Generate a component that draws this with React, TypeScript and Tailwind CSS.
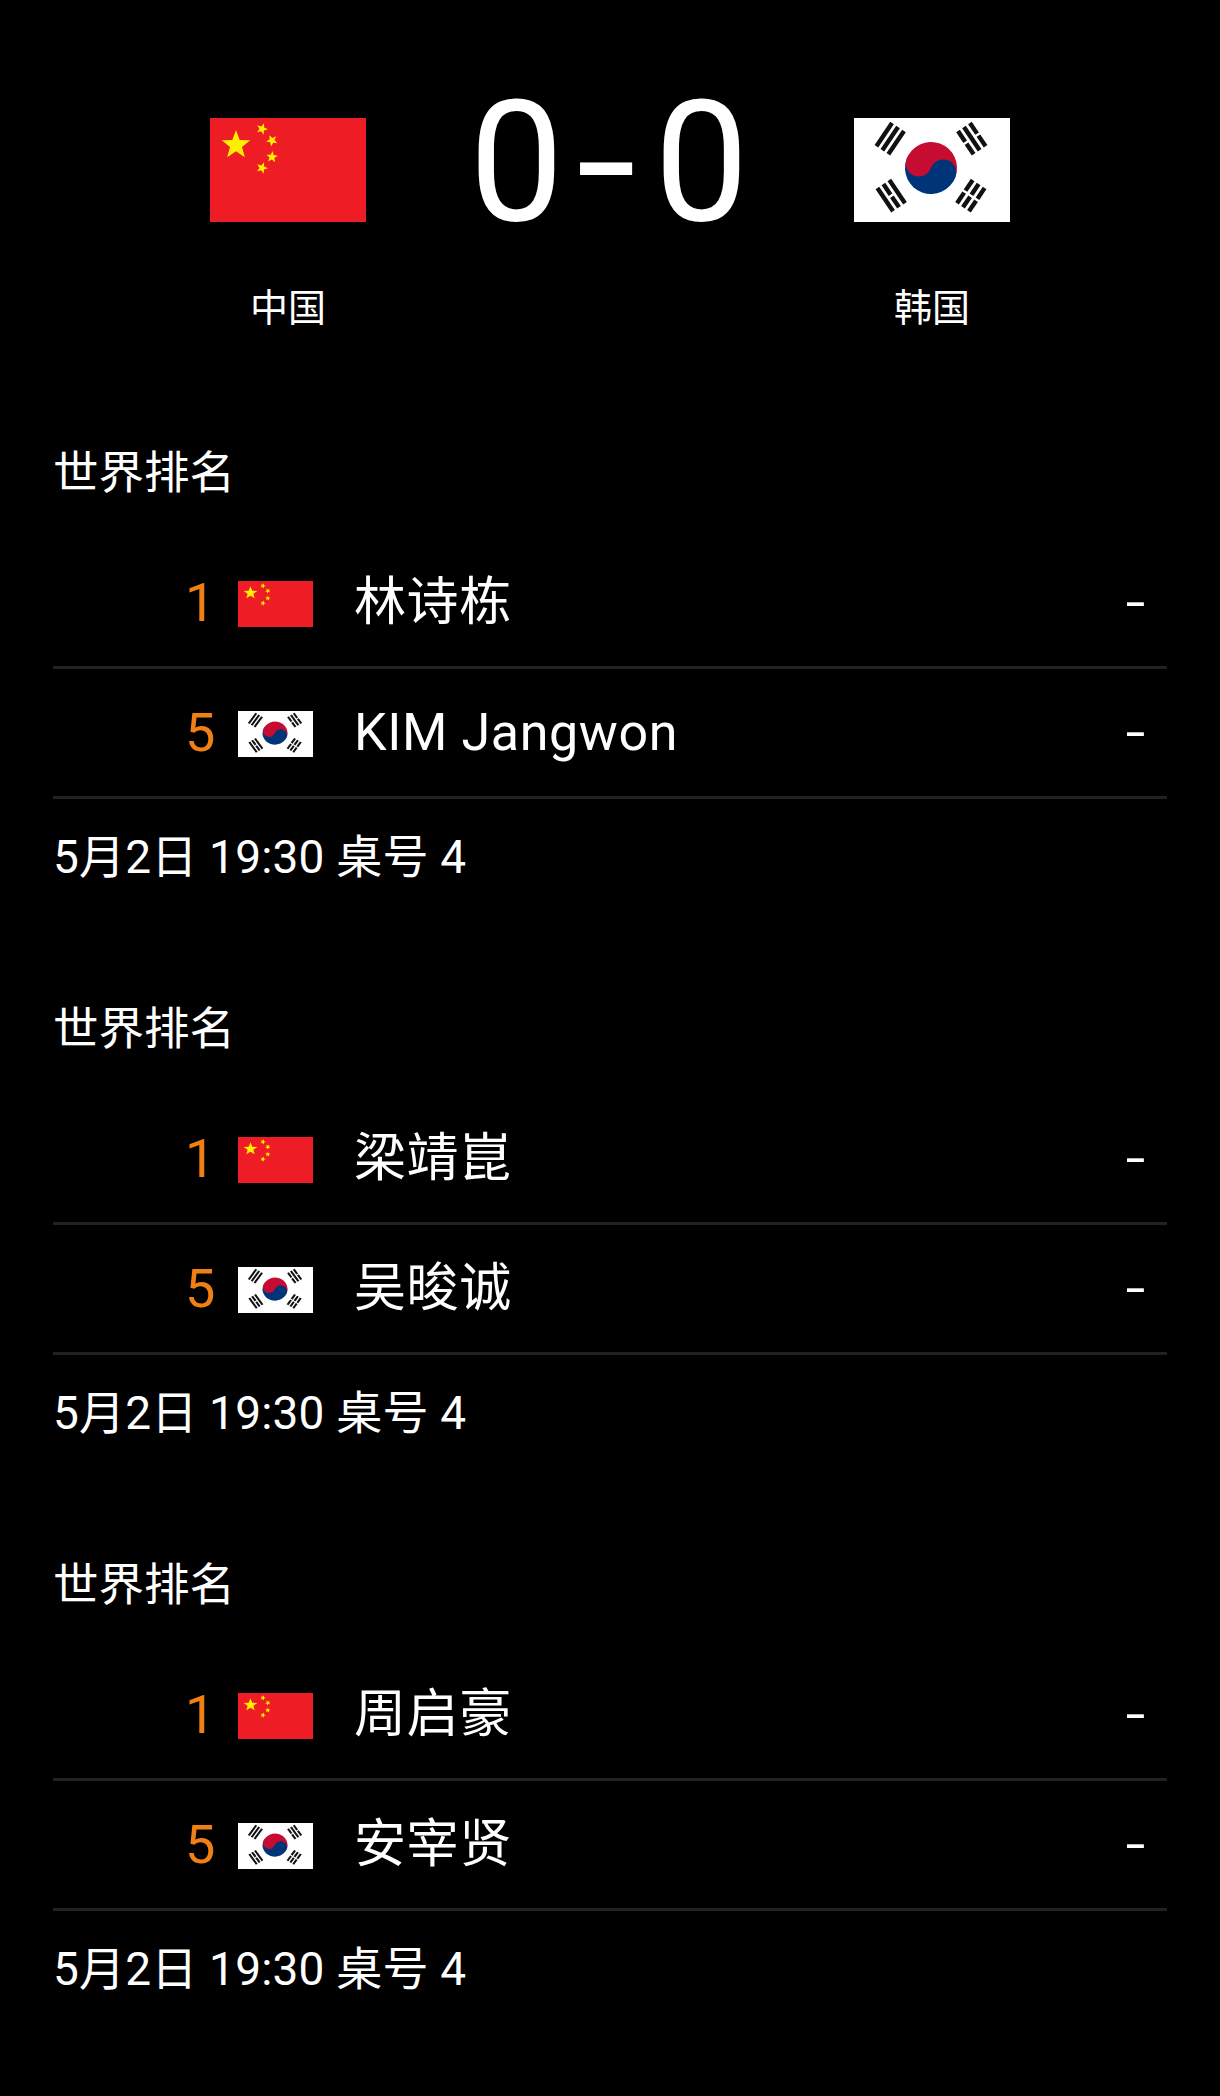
import React from "react";

const CJK = "font-['Roboto','Noto_Sans_CJK_SC',sans-serif]";

function Star({ cx, cy, r, rot = 0 }: { cx: number; cy: number; r: number; rot?: number }) {
  const pts: string[] = [];
  for (let i = 0; i < 10; i++) {
    const a = ((-90 + rot + i * 36) * Math.PI) / 180;
    const rad = i % 2 === 0 ? r : r * 0.42;
    pts.push(`${(cx + rad * Math.cos(a)).toFixed(2)},${(cy + rad * Math.sin(a)).toFixed(2)}`);
  }
  return <polygon points={pts.join(" ")} fill="#ffee00" />;
}

function ChinaFlag({ className }: { className: string }) {
  return (
    <svg viewBox="0 0 156 104" preserveAspectRatio="none" className={className}>
      <rect width="156" height="104" fill="#ee1c25" />
      <g className="blur-[0.7px]">
        <Star cx={26} cy={27} r={15} />
        <Star cx={52} cy={11} r={6} rot={20} />
        <Star cx={62} cy={22.5} r={6} rot={45} />
        <Star cx={62} cy={39} r={6} rot={5} />
        <Star cx={52} cy={50} r={6} rot={20} />
      </g>
    </svg>
  );
}

function Trigram({ x, y, rot, breaks }: { x: number; y: number; rot: number; breaks: boolean[] }) {
  return (
    <g transform={`translate(${x} ${y}) rotate(${rot})`}>
      {breaks.map((b, i) => {
        const py = -9.5 + i * 7.2 - 0.5;
        return b ? (
          <g key={i}>
            <rect x={-14} y={py} width={12.8} height={4.4} fill="#111" />
            <rect x={1.2} y={py} width={12.8} height={4.4} fill="#111" />
          </g>
        ) : (
          <rect key={i} x={-14} y={py} width={28} height={4.4} fill="#111" />
        );
      })}
    </g>
  );
}

function KoreaFlag({ className }: { className: string }) {
  const cx = 77;
  const cy = 50;
  const r = 26;
  return (
    <svg viewBox="0 0 156 104" preserveAspectRatio="none" className={className}>
      <rect width="156" height="104" fill="#ffffff" />
      <g className="blur-[0.7px]">
        <g transform={`rotate(20 ${cx} ${cy})`}>
          <path d={`M${cx - r} ${cy}A${r} ${r} 0 0 1 ${cx + r} ${cy}Z`} fill="#c60c30" />
          <path d={`M${cx - r} ${cy}A${r} ${r} 0 0 0 ${cx + r} ${cy}Z`} fill="#003478" />
          <circle cx={cx - r / 2} cy={cy} r={r / 2} fill="#c60c30" />
          <circle cx={cx + r / 2} cy={cy} r={r / 2} fill="#003478" />
        </g>
        <Trigram x={36.7} y={21} rot={-56} breaks={[false, false, false]} />
        <Trigram x={117.3} y={21} rot={56} breaks={[true, false, true]} />
        <Trigram x={36.7} y={78} rot={56} breaks={[false, true, false]} />
        <Trigram x={117.3} y={78} rot={-56} breaks={[true, true, true]} />
      </g>
    </svg>
  );
}

function PlayerRow({ rank, name, korea }: { rank: string; name: string; korea?: boolean }) {
  return (
    <div className="flex h-[130px] items-center border-b-[3px] border-[#222222] pl-[134px] pr-[21px]">
      <span className="-ml-[2px] w-[53px] text-[54px] font-normal leading-none text-[#f08014]">{rank}</span>
      {korea ? (
        <KoreaFlag className="mt-[2px] h-[46px] w-[75px]" />
      ) : (
        <ChinaFlag className="mt-[2px] h-[46px] w-[75px]" />
      )}
      <span className="ml-[41px] flex-1 text-[52px] font-normal leading-none tracking-[0.6px] text-white">{name}</span>
      <span className="text-[72px] font-light leading-none text-white">-</span>
    </div>
  );
}

function Match({ a, b }: { a: string; b: string }) {
  return (
    <section className="mx-[53px] h-[556px]">
      <div className="flex h-[136px] items-center pt-[6px] text-[45.5px] font-normal leading-none text-white">世界排名</div>
      <PlayerRow rank="1" name={a} />
      <PlayerRow rank="5" name={b} korea />
      <div className="flex h-[116px] items-center text-[46px] font-normal leading-none tracking-[0.2px] text-white">5月2日 19:30 桌号 4</div>
    </section>
  );
}

export default function App() {
  return (
    <div className={`h-[2096px] w-[1220px] overflow-hidden bg-black pt-[80px] ${CJK}`}>
      <div className="flex h-[142px] items-end justify-center">
        <ChinaFlag className="h-[104px] w-[156px]" />
        <div className="flex h-[142px] w-[488px] items-center justify-center pl-[20px] pt-[24px] text-[168px] font-normal leading-none text-white">
          <span className="mr-[19px]">0</span>
          <span className="mr-[25px] inline-block scale-x-[1.3]">-</span>
          <span className="mr-[22px]">0</span>
        </div>
        <KoreaFlag className="h-[104px] w-[156px]" />
      </div>
      <div className="mt-[67px] flex justify-center text-[38px] font-normal leading-none text-white">
        <div className="w-[156px] text-center">中国</div>
        <div className="w-[488px]" />
        <div className="w-[156px] text-center">韩国</div>
      </div>
      <div className="mt-[76px]">
        <Match a="林诗栋" b="KIM Jangwon" />
        <Match a="梁靖崑" b="吴晙诚" />
        <Match a="周启豪" b="安宰贤" />
      </div>
    </div>
  );
}
